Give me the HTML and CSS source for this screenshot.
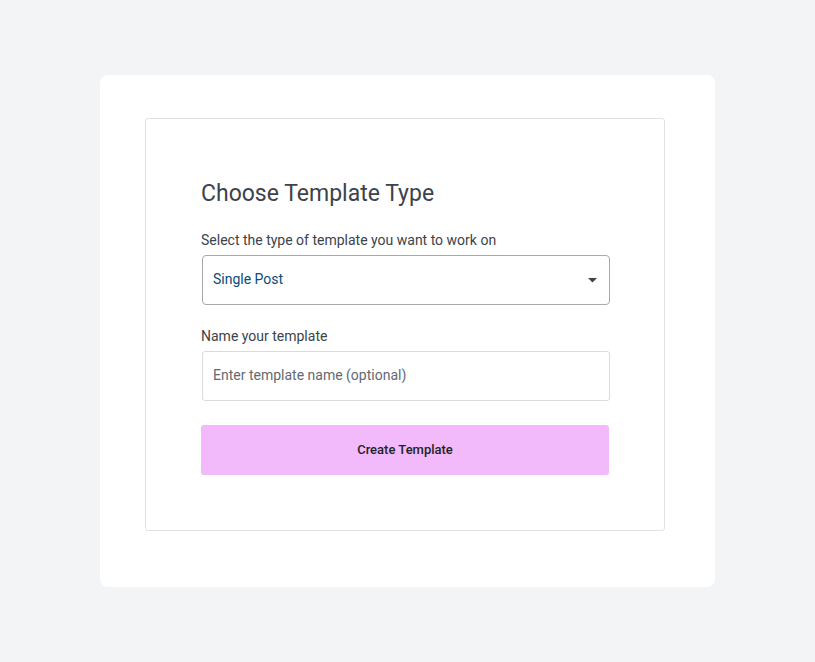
FILE: index.html
```html
<!DOCTYPE html>
<html lang="en">
<head>
<meta charset="utf-8">
<title>Choose Template Type</title>
<link rel="stylesheet" href="styles.css">
</head>
<body>
<div class="page">
  <div class="card">
    <div class="panel">
      <h1 class="title">Choose Template Type</h1>
      <label class="label" for="type">Select the type of template you want to work on</label>
      <div class="select">
        <span class="select-value">Single Post</span>
        <svg class="caret" width="9" height="5" viewBox="0 0 9 5"><path d="M0 0H9L4.5 4.5Z" fill="#3c434a"/></svg>
      </div>
      <label class="label label-2" for="name">Name your template</label>
      <input id="name" class="input" type="text" placeholder="Enter template name (optional)">
      <button class="btn" type="button">Create Template</button>
    </div>
  </div>
</div>
</body>
</html>
```
FILE: styles.css
```css
* { box-sizing: border-box; }
html, body { margin: 0; padding: 0; }
body {
  background: #f3f4f6;
  font-family: Roboto, "Liberation Sans", Arial, sans-serif;
  color: #3c434a;
  width: 815px;
  height: 662px;
}
.page {
  padding-top: 75px;
  padding-left: 100px;
}
.card {
  width: 615px;
  height: 512px;
  background: #fff;
  border-radius: 8px;
  padding: 43px 50px 0 45px;
}
.panel {
  width: 520px;
  height: 413px;
  border: 1px solid #e1e2e4;
  border-radius: 3px;
  padding: 55px 55px 55px 55px;
  display: flex;
  flex-direction: column;
}
.title {
  margin: 2px 0 18px 0;
  font-size: 23px;
  font-weight: 400;
  line-height: 36px;
  color: #3c434a;
}
.label {
  display: block;
  font-size: 14px;
  line-height: 20px;
  color: #3c434a;
  margin-bottom: 5px;
}
.label-2 { margin-top: 21px; }
.select {
  margin-left: 1px;
  width: 408px;
  height: 50px;
  border: 1px solid #a7aaad;
  border-radius: 4px;
  display: flex;
  align-items: center;
  justify-content: space-between;
  padding: 0 12px 2px 10px;
}
.select-value {
  font-size: 14px;
  color: #0a4b78;
}
.caret { display: block; margin-top: 3px; }
.input {
  margin-left: 1px;
  width: 408px;
  height: 50px;
  border: 1px solid #dcdcde;
  border-radius: 3px;
  padding: 0 10px 2px;
  font-family: inherit;
  font-size: 14px;
  color: #3c434a;
  outline: none;
}
.input::placeholder { color: #646970; opacity: 1; }
.btn {
  margin-top: 24px;
  width: 408px;
  height: 50px;
  border: none;
  border-radius: 3px;
  background: #f2b9fb;
  font-family: inherit;
  font-size: 13px;
  font-weight: 500;
  color: #1d2327;
  padding-bottom: 2px;
  cursor: pointer;
}
```
